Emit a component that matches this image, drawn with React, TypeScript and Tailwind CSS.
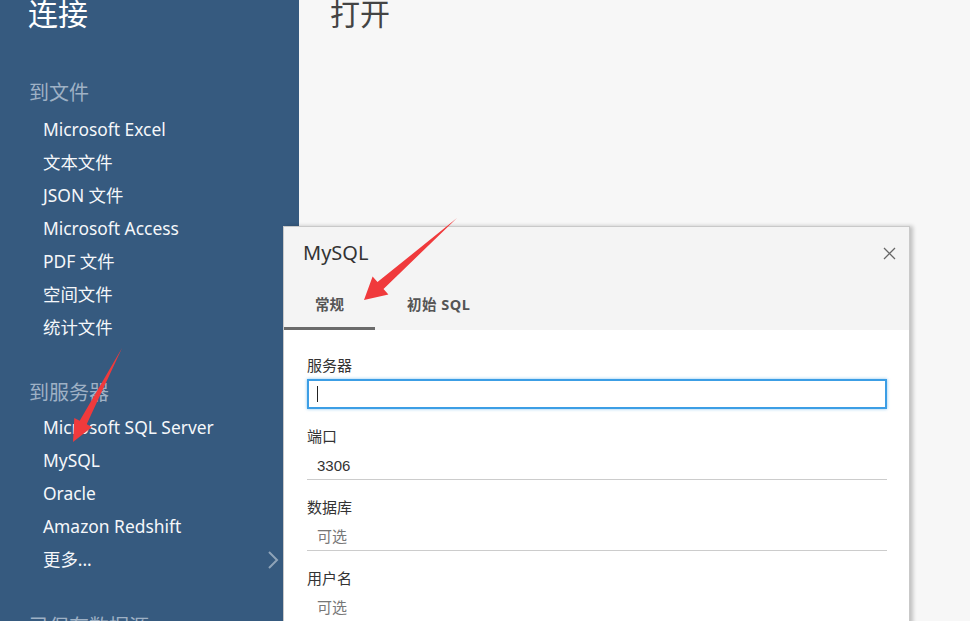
import React from 'react'

const fileItems = ['Microsoft Excel', '文本文件', 'JSON 文件', 'Microsoft Access', 'PDF 文件', '空间文件', '统计文件']
const serverItems = ['Microsoft SQL Server', 'MySQL', 'Oracle', 'Amazon Redshift']

const font = "font-['Noto_Sans','Noto_Sans_CJK_SC',sans-serif]"

function Field({ label, value, muted }: { label: string; value: string; muted?: boolean }) {
  return (
    <div className="mt-[17px]">
      <div className="h-[20px] leading-[20px] text-[15px] text-[#333]">{label}</div>
      <div
        className={`h-[34px] pt-[7px] pl-[10px] leading-[26px] text-[15px] border-b border-[#cccccc] font-['Liberation_Sans','Noto_Sans_CJK_SC',sans-serif] ${
          muted ? 'text-[#777]' : 'text-[#333]'
        }`}
      >
        {value}
      </div>
    </div>
  )
}

export default function App() {
  return (
    <div className={`relative w-[970px] h-[621px] overflow-hidden flex bg-[#f7f7f7] ${font}`}>
      {/* Sidebar */}
      <div className="w-[299px] shrink-0 bg-[#365a7f] flex flex-col">
        <div className="mt-[-4px] h-[36px] leading-[36px] pl-[28px] text-[30px] text-white">连接</div>

        <div className="mt-[44px] h-[34px] leading-[34px] pl-[29px] text-[20px] text-[#9fb1c5]">到文件</div>
        <div className="mt-[3px]">
          {fileItems.map(item => (
            <div key={item} className="h-[33px] leading-[33px] pl-[43px] text-[17.4px] text-[#f5f7fa]">
              {item}
            </div>
          ))}
        </div>

        <div className="mt-[32px] h-[34px] leading-[34px] pl-[29px] text-[20px] text-[#9fb1c5]">到服务器</div>
        <div className="mt-[1px]">
          {serverItems.map(item => (
            <div key={item} className="h-[33px] leading-[33px] pl-[43px] text-[17.4px] text-[#f5f7fa]">
              {item}
            </div>
          ))}
          <div className="h-[33px] flex items-center justify-between pl-[43px] pr-[20px] text-[17.4px] text-[#f5f7fa]">
            <span>更多...</span>
            <svg width="12" height="20" viewBox="0 0 12 20" fill="none">
              <path d="M2 2l8 8-8 8" stroke="#8fa3b8" strokeWidth="2" />
            </svg>
          </div>
        </div>

        <div className="mt-[34px] h-[34px] leading-[34px] pl-[29px] text-[20px] text-[#9fb1c5]">已保存数据源</div>
      </div>

      {/* Main */}
      <div className="flex-1">
        <div className="mt-[-4px] h-[36px] leading-[36px] pl-[31px] text-[30px] text-[#444]">打开</div>
      </div>

      {/* MySQL dialog */}
      <div className="absolute left-[283px] top-[226px] w-[627px] h-[420px] bg-white border border-[#c9c9c9] shadow-[3px_0_4px_rgba(0,0,0,0.22)]">
        <div className="bg-[#f4f4f4] h-[103px] flex flex-col">
          <div className="h-[52px] flex items-center justify-between pl-[19px] pr-[13px]">
            <span className="text-[20px] text-[#333]">MySQL</span>
            <svg width="13" height="13" viewBox="0 0 13 13">
              <path d="M1 1l11 11M12 1L1 12" stroke="#666" strokeWidth="1.3" />
            </svg>
          </div>
          <div className="h-[51px] flex">
            <div className="w-[91px] pt-[3px] flex items-center justify-center border-b-[3px] border-[#6b6b6b] text-[14.5px] font-bold text-[#555]">
              常规
            </div>
            <div className="pl-[32px] pt-[3px] flex items-center border-b-[3px] border-transparent text-[14.5px] font-bold text-[#555] tracking-[0.5px]">
              初始 SQL
            </div>
          </div>
        </div>

        <div className="pl-[23px] pr-[22px] pt-[25px]">
          <div className="h-[20px] leading-[20px] text-[15px] text-[#333]">服务器</div>
          <div className="mt-[4px] h-[30px] border-2 border-[#3c9ee5] shadow-[0_0_3px_rgba(60,158,229,0.6)] flex items-center pl-[8px]">
            <div className="w-px h-[16px] bg-[#222]" />
          </div>
          <Field label="端口" value="3306" />
          <Field label="数据库" value="可选" muted />
          <Field label="用户名" value="可选" muted />
        </div>
      </div>

      {/* Annotation arrows */}
      <svg className="absolute inset-0 pointer-events-none" width="970" height="621">
        <polygon
          points="364,300 372.6,276.5 377.5,282.1 457,218 383.5,288.9 388.4,294.5"
          fill="#f03a3c"
        />
        <polygon
          points="73,442 74.3,417.9 79.7,420.7 122,348 86.7,424.3 92.1,427.1"
          fill="#f03a3c"
        />
      </svg>
    </div>
  )
}
